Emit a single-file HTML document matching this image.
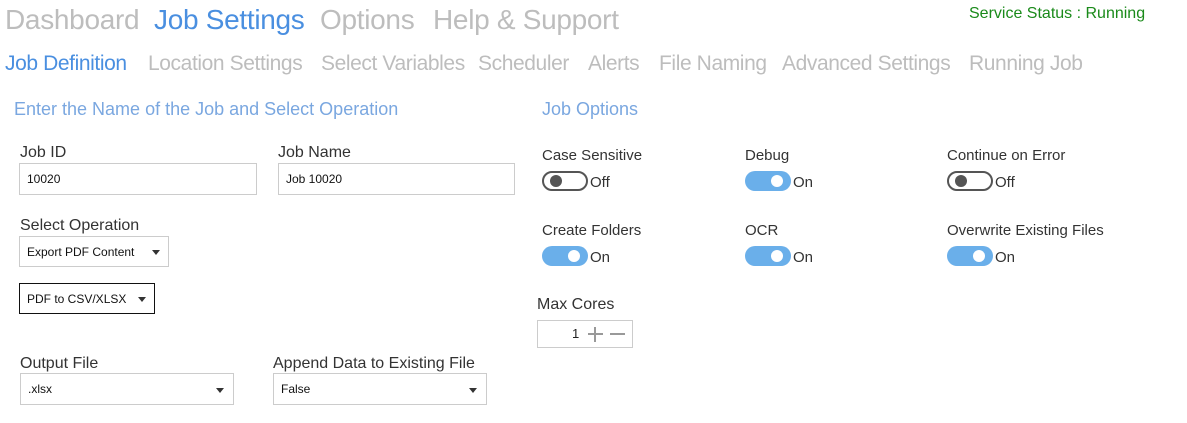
<!DOCTYPE html>
<html><head><meta charset="utf-8"><style>
*{margin:0;padding:0;box-sizing:border-box}
body{width:1187px;height:423px;background:#fff;font-family:"Liberation Sans",sans-serif;position:relative;overflow:hidden;color:#333}
.a{position:absolute;white-space:nowrap}
.top{font-size:28px;color:#bdbdbd;top:4px;letter-spacing:-0.3px}
.sub{font-size:21px;color:#bdbdbd;top:52px;letter-spacing:-0.4px}
.blue{color:#4a8fe0}
.hd{font-size:18px;color:#7aa7e0;top:99px}
.lbl{font-size:16px;color:#333}
.box{position:absolute;border:1px solid #ccc;font-size:12px;color:#111;padding-left:7px;display:flex;align-items:center}
.caret{position:absolute;width:0;height:0;border-left:4px solid transparent;border-right:4px solid transparent;border-top:5px solid #333}
.tg{position:absolute;width:46px;height:20px;border-radius:10px}
.on{background:#6aafea}
.on::after{content:"";position:absolute;right:8px;top:4px;width:12px;height:12px;border-radius:50%;background:#fff}
.off{border:2px solid #555;background:#fff}
.off::after{content:"";position:absolute;left:6px;top:2px;width:12px;height:12px;border-radius:50%;background:#555}
.tt{font-size:15px;color:#333}
</style></head><body>
<div class="a top" style="left:5px">Dashboard</div>
<div class="a top blue" style="left:154px">Job Settings</div>
<div class="a top" style="left:320px">Options</div>
<div class="a top" style="left:433px">Help &amp; Support</div>
<div class="a" style="left:969px;top:5px;font-size:16px;color:#1a8a1a">Service Status : Running</div>

<div class="a sub blue" style="left:5px">Job Definition</div>
<div class="a sub" style="left:148px">Location Settings</div>
<div class="a sub" style="left:321px">Select Variables</div>
<div class="a sub" style="left:478px">Scheduler</div>
<div class="a sub" style="left:588px">Alerts</div>
<div class="a sub" style="left:659px">File Naming</div>
<div class="a sub" style="left:782px">Advanced Settings</div>
<div class="a sub" style="left:969px">Running Job</div>

<div class="a hd" style="left:14px">Enter the Name of the Job and Select Operation</div>
<div class="a hd" style="left:542px">Job Options</div>

<div class="a lbl" style="left:20px;top:144px">Job ID</div>
<div class="box" style="left:19px;top:163px;width:238px;height:32px">10020</div>
<div class="a lbl" style="left:278px;top:144px">Job Name</div>
<div class="box" style="left:278px;top:163px;width:237px;height:32px">Job 10020</div>

<div class="a lbl" style="left:20px;top:217px">Select Operation</div>
<div class="box" style="left:19px;top:236px;width:150px;height:31px">Export PDF Content<span class="caret" style="left:132px;top:13px"></span></div>
<div class="box" style="left:19px;top:283px;width:136px;height:31px;border-color:#111">PDF to CSV/XLSX<span class="caret" style="left:118px;top:13px"></span></div>

<div class="a lbl" style="left:20px;top:355px">Output File</div>
<div class="box" style="left:20px;top:373px;width:214px;height:32px">.xlsx<span class="caret" style="left:195px;top:14px"></span></div>
<div class="a lbl" style="left:273px;top:355px">Append Data to Existing File</div>
<div class="box" style="left:273px;top:373px;width:214px;height:32px">False<span class="caret" style="left:195px;top:14px"></span></div>

<div class="a tt" style="left:542px;top:147px">Case Sensitive</div>
<div class="tg off" style="left:542px;top:171px"></div><div class="a tt" style="left:590px;top:174px">Off</div>
<div class="a tt" style="left:745px;top:147px">Debug</div>
<div class="tg on" style="left:745px;top:171px"></div><div class="a tt" style="left:793px;top:174px">On</div>
<div class="a tt" style="left:947px;top:147px">Continue on Error</div>
<div class="tg off" style="left:947px;top:171px"></div><div class="a tt" style="left:995px;top:174px">Off</div>

<div class="a tt" style="left:542px;top:222px">Create Folders</div>
<div class="tg on" style="left:542px;top:246px"></div><div class="a tt" style="left:590px;top:249px">On</div>
<div class="a tt" style="left:745px;top:222px">OCR</div>
<div class="tg on" style="left:745px;top:246px"></div><div class="a tt" style="left:793px;top:249px">On</div>
<div class="a tt" style="left:947px;top:222px">Overwrite Existing Files</div>
<div class="tg on" style="left:947px;top:246px"></div><div class="a tt" style="left:995px;top:249px">On</div>

<div class="a lbl" style="left:537px;top:296px">Max Cores</div>
<div class="a" style="left:537px;top:320px;width:96px;height:28px;border:1px solid #ccc"></div>
<div class="a" style="left:572px;top:326px;font-size:13px;color:#222">1</div>
<div class="a" style="left:588px;top:333px;width:15px;height:2px;background:#999"></div>
<div class="a" style="left:594px;top:327px;width:2px;height:15px;background:#999"></div>
<div class="a" style="left:610px;top:333px;width:15px;height:2px;background:#999"></div>
</body></html>
